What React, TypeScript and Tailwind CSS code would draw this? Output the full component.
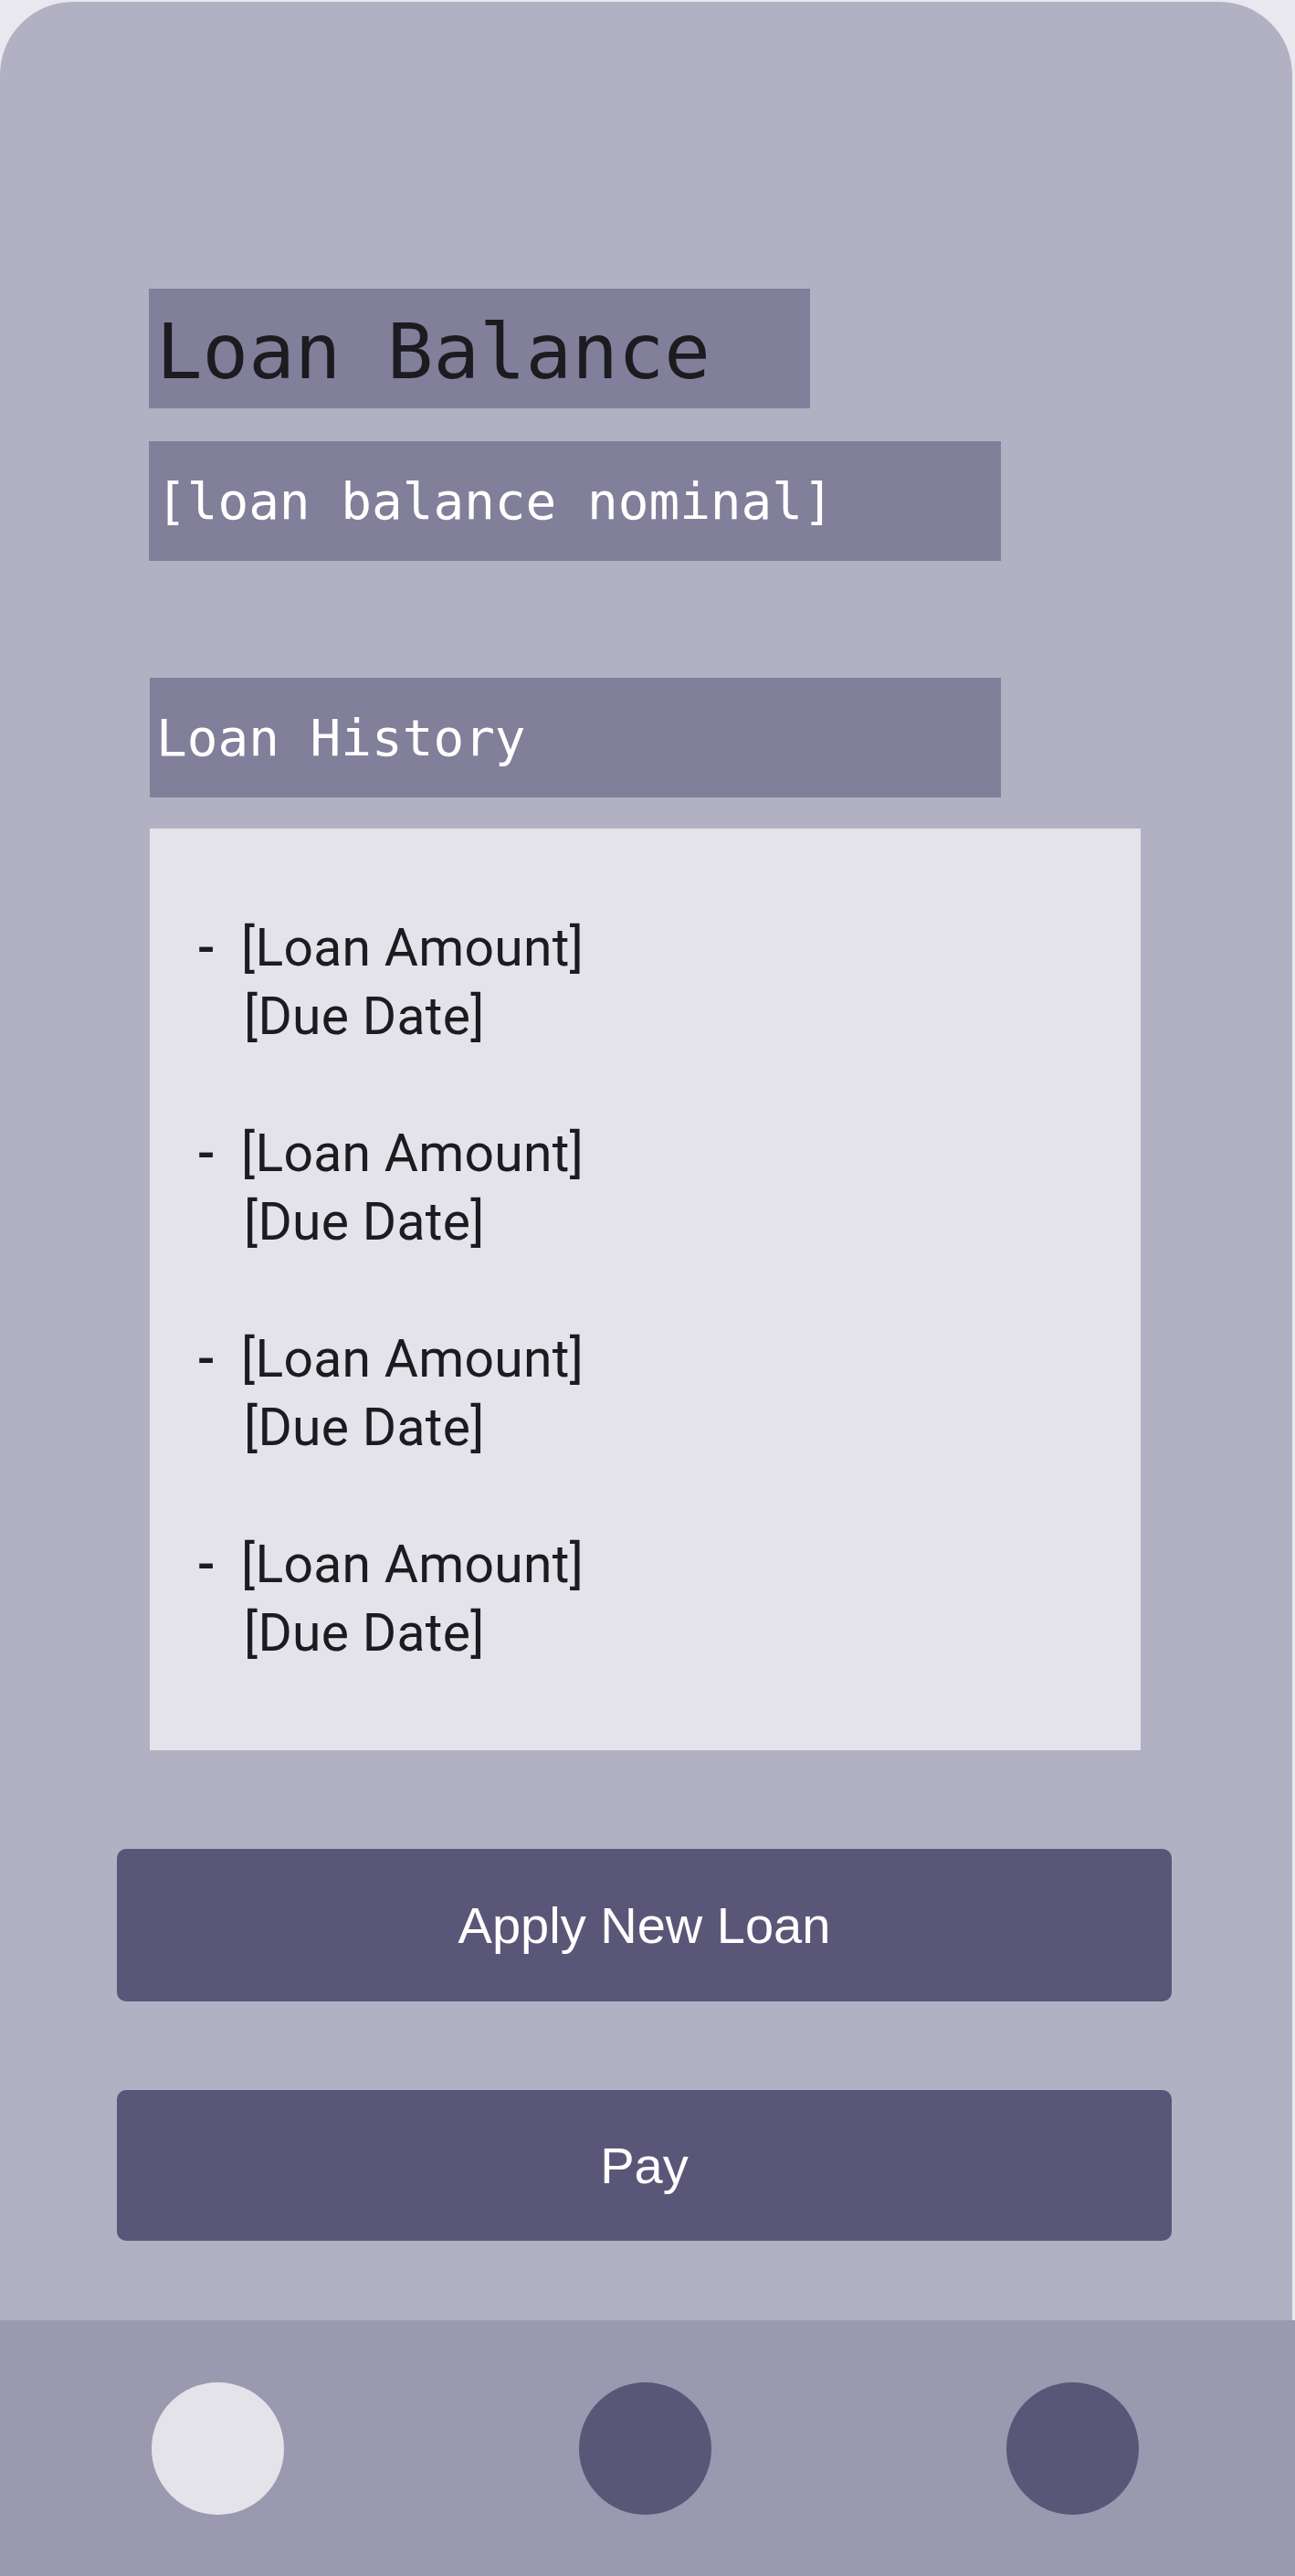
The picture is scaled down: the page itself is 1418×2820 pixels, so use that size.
import React from "react";

const loans = [1, 2, 3, 4];

const mono = { fontFamily: '"DejaVu Sans Mono", "Liberation Mono", monospace' };

export default function App() {
  return (
    <div className="flex h-[2820px] w-[1418px] flex-col bg-[#e8e8ee]">
      {/* Phone frame */}
      <div className="mt-[2px] flex w-[1415px] flex-1 flex-col rounded-t-[80px] bg-[#b2b1c3]">
        <div className="flex flex-col pl-[163px] pt-[314px]">
          <div
            className="flex h-[131px] w-[724px] items-center bg-[#817f9a] pl-[8px] pt-[6px] text-[84px] leading-none text-[#1c1b1f]"
            style={mono}
          >
            Loan Balance
          </div>
          <div
            className="mt-[36px] flex h-[131px] w-[933px] items-center bg-[#817f9a] pl-[8px] text-[56px] leading-none text-white"
            style={mono}
          >
            [loan balance nominal]
          </div>
          <div
            className="ml-px mt-[128px] flex h-[131px] w-[932px] items-center bg-[#817f9a] pl-[7px] text-[56px] leading-none text-white"
            style={mono}
          >
            Loan History
          </div>

          {/* History list */}
          <div
            className="ml-px mt-[34px] flex h-[1009px] w-[1085px] flex-col gap-[75px] bg-[#e4e3ea] pl-[52px] pt-[93px] text-[57px] leading-[75px] tracking-[0.3px] text-[#1c1b1f]"
            style={{ fontFamily: "Roboto, sans-serif" }}
          >
            {loans.map((n) => (
              <div key={n} className="flex">
                <span className="w-[48px] font-medium">-</span>
                <div className="flex flex-col">
                  <span>[Loan Amount]</span>
                  <span className="pl-[3px]">[Due Date]</span>
                </div>
              </div>
            ))}
          </div>
        </div>

        <div
          className="flex flex-col gap-[97px] pl-[128px] pt-[108px] text-[56px] text-white"
          style={{ fontFamily: '"Liberation Sans", Arial, sans-serif' }}
        >
          <button className="flex h-[167px] w-[1155px] items-center justify-center rounded-[10px] bg-[#5a5678]">
            Apply New Loan
          </button>
          <button className="flex h-[165px] w-[1155px] items-center justify-center rounded-[10px] bg-[#5a5678]">
            Pay
          </button>
        </div>
      </div>

      {/* Bottom nav */}
      <div className="flex h-[280px] w-full items-center gap-[323px] bg-[#9b99af] pl-[166px]">
        <div className="h-[145px] w-[145px] rounded-full bg-[#e4e3ea]" />
        <div className="h-[145px] w-[145px] rounded-full bg-[#5a5678]" />
        <div className="h-[145px] w-[145px] rounded-full bg-[#5a5678]" />
      </div>
    </div>
  );
}
